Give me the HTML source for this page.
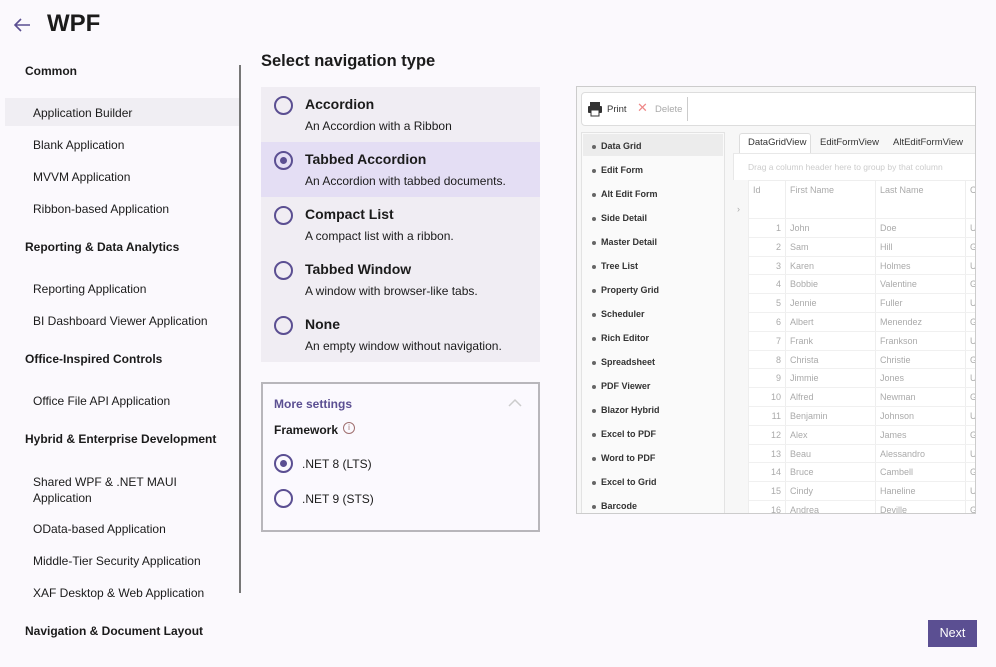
<!DOCTYPE html>
<html><head><meta charset="utf-8"><style>
*{box-sizing:border-box;margin:0;padding:0}
body{width:996px;height:666px;background:#fbf9fd;font-family:"Segoe UI","Liberation Sans",sans-serif;color:#1b1b1b;position:relative;overflow:hidden;font-size:12px}
#w{position:absolute;left:0;top:1px;width:996px;height:666px}
.abs{position:absolute}
.cat{position:absolute;left:25px;font-weight:bold;font-size:12px}
.it{position:absolute;left:33px;font-size:12px}
.opt{position:absolute;left:261px;width:279px;height:55px;background:#f0edf3}
.opt .r{position:absolute;left:13px;top:9px;width:19px;height:19px;border:2px solid #5b4f92;border-radius:50%}
.opt .t{position:absolute;left:44px;top:9px;font-weight:bold;font-size:14px}
.opt .d{position:absolute;left:44px;top:32px;font-size:12px}
.dot{position:absolute;left:4px;top:4px;width:7px;height:7px;border-radius:50%;background:#5b4f92}
.nl{position:absolute;left:24px;font-size:9px;font-weight:bold;color:#333}
.nl:before{content:"";position:absolute;left:-9px;top:4px;width:4px;height:4px;border-radius:50%;background:#666}
.gr{position:absolute;font-size:9px;color:#aaa}
</style></head><body><div id="w">
<svg class="abs" style="left:12px;top:15px" width="20" height="18"><path d="M18 9H3M9 3L3 9l6 6" stroke="#5b4f92" stroke-width="1.6" fill="none"/></svg>
<div class="abs" style="left:47px;top:9px;font-size:24px;font-weight:bold">WPF</div>

<div class="cat" style="top:63px">Common</div>
<div class="abs" style="left:5px;top:97px;width:234px;height:28px;background:#f0eef3"></div>
<div class="it" style="top:105px">Application Builder</div>
<div class="it" style="top:137px">Blank Application</div>
<div class="it" style="top:169px">MVVM Application</div>
<div class="it" style="top:201px">Ribbon-based Application</div>
<div class="cat" style="top:239px">Reporting &amp; Data Analytics</div>
<div class="it" style="top:281px">Reporting Application</div>
<div class="it" style="top:313px">BI Dashboard Viewer Application</div>
<div class="cat" style="top:351px">Office-Inspired Controls</div>
<div class="it" style="top:393px">Office File API Application</div>
<div class="cat" style="top:431px">Hybrid &amp; Enterprise Development</div>
<div class="it" style="top:473px;line-height:16px">Shared WPF &amp; .NET MAUI<br>Application</div>
<div class="it" style="top:521px">OData-based Application</div>
<div class="it" style="top:553px">Middle-Tier Security Application</div>
<div class="it" style="top:585px">XAF Desktop &amp; Web Application</div>
<div class="cat" style="top:623px">Navigation &amp; Document Layout</div>
<div class="abs" style="left:239px;top:64px;width:2px;height:528px;background:#777"></div>

<div class="abs" style="left:261px;top:51px;font-size:16.5px;font-weight:bold">Select navigation type</div>
<div class="opt" style="top:86px"><div class="r"></div><div class="t">Accordion</div><div class="d">An Accordion with a Ribbon</div></div>
<div class="opt" style="top:141px;background:#e4def4"><div class="r"><div class="dot"></div></div><div class="t">Tabbed Accordion</div><div class="d">An Accordion with tabbed documents.</div></div>
<div class="opt" style="top:196px"><div class="r"></div><div class="t">Compact List</div><div class="d">A compact list with a ribbon.</div></div>
<div class="opt" style="top:251px"><div class="r"></div><div class="t">Tabbed Window</div><div class="d">A window with browser-like tabs.</div></div>
<div class="opt" style="top:306px"><div class="r"></div><div class="t">None</div><div class="d">An empty window without navigation.</div></div>

<div class="abs" style="left:261px;top:381px;width:279px;height:150px;border:2px solid #b8b6bb;background:#fbf9fe"></div>
<div class="abs" style="left:274px;top:396px;font-weight:bold;color:#5b4f92">More settings</div>
<svg class="abs" style="left:507px;top:397px" width="16" height="10"><path d="M2 8l6-6 6 6" stroke="#ccc" stroke-width="1.5" fill="none"/></svg>
<div class="abs" style="left:274px;top:422px;font-weight:bold">Framework</div>
<div class="abs" style="left:343px;top:421px;width:12px;height:12px;border:1px solid #a07070;border-radius:50%;font-size:8px;text-align:center;line-height:10px;color:#a07070">i</div>
<div class="opt" style="left:261px;top:443px;width:0;background:none"><div class="r" style="left:13px;top:10px"><div class="dot"></div></div></div>
<div class="abs" style="left:302px;top:456px">.NET 8 (LTS)</div>
<div class="opt" style="left:261px;top:478px;width:0;background:none"><div class="r" style="left:13px;top:10px"></div></div>
<div class="abs" style="left:302px;top:491px">.NET 9 (STS)</div>

<div class="abs" style="left:576px;top:85px;width:400px;height:428px;border:1px solid #ccc;background:#f7f7f7;overflow:hidden">
 <div class="abs" style="left:4px;top:5px;width:400px;height:34px;background:#fff;border:1px solid #ddd;border-radius:4px"></div>
 <svg class="abs" style="left:10px;top:14px" width="16" height="16"><rect x="3" y="1" width="10" height="4" fill="#333"/><rect x="1" y="5" width="14" height="7" rx="1" fill="#333"/><rect x="4" y="9" width="8" height="6" fill="#fff" stroke="#333"/></svg>
 <div class="abs" style="left:30px;top:17px;font-size:9.5px;color:#333">Print</div>
 <div class="abs" style="left:60px;top:13px;font-size:13px;color:#e88">✕</div>
 <div class="abs" style="left:78px;top:17px;font-size:9.5px;color:#aaa">Delete</div>
 <div class="abs" style="left:110px;top:10px;width:1px;height:24px;background:#ccc"></div>
 <div class="abs" style="left:4px;top:45px;width:144px;height:383px;background:#fafafa;border:1px solid #e3e3e3"></div>
 <div class="abs" style="left:6px;top:47px;width:140px;height:22px;background:#ececec"></div>
 <div class="nl" style="top:54px">Data Grid</div><div class="nl" style="top:78px">Edit Form</div><div class="nl" style="top:102px">Alt Edit Form</div><div class="nl" style="top:126px">Side Detail</div><div class="nl" style="top:150px">Master Detail</div><div class="nl" style="top:174px">Tree List</div><div class="nl" style="top:198px">Property Grid</div><div class="nl" style="top:222px">Scheduler</div><div class="nl" style="top:246px">Rich Editor</div><div class="nl" style="top:270px">Spreadsheet</div><div class="nl" style="top:294px">PDF Viewer</div><div class="nl" style="top:318px">Blazor Hybrid</div><div class="nl" style="top:342px">Excel to PDF</div><div class="nl" style="top:366px">Word to PDF</div><div class="nl" style="top:390px">Excel to Grid</div><div class="nl" style="top:414px">Barcode</div>
 <div class="abs" style="left:162px;top:46px;width:72px;height:20px;background:#fff;border:1px solid #ddd;border-bottom:none;border-radius:3px 3px 0 0"></div>
 <div class="abs" style="left:171px;top:50px;font-size:9.5px;color:#333">DataGridView</div>
 <div class="abs" style="left:243px;top:50px;font-size:9.5px;color:#333">EditFormView</div>
 <div class="abs" style="left:316px;top:50px;font-size:9.5px;color:#333">AltEditFormView</div>
 <div class="abs" style="left:156px;top:66px;width:250px;height:370px;background:#fff;border:1px solid #e8e8e8"></div>
 <div class="abs" style="left:171px;top:75px;font-size:8.5px;color:#ccc">Drag a column header here to group by that column</div>
 <div class="abs" style="left:156px;top:93px;width:250px;height:1px;background:#eee"></div>
 <div class="abs" style="left:156px;top:93px;width:16px;height:340px;background:#f7f7f7;border-right:1px solid #eee"></div>
 <div class="abs" style="left:208px;top:93px;width:1px;height:340px;background:#eee"></div>
 <div class="abs" style="left:298px;top:93px;width:1px;height:340px;background:#eee"></div>
 <div class="abs" style="left:388px;top:93px;width:1px;height:340px;background:#eee"></div>
 <div class="gr" style="left:176px;top:98px">Id</div><div class="gr" style="left:213px;top:98px">First Name</div><div class="gr" style="left:303px;top:98px">Last Name</div><div class="gr" style="left:393px;top:98px">C</div>
 <div class="gr" style="left:160px;top:117px">›</div>
 <div id="rows"></div>
</div>
<div class="abs" style="left:928px;top:619px;width:49px;height:27px;background:#5b4f92;color:#fff;text-align:center;line-height:27px;font-size:12.5px">Next</div>
</div>
<script>
var n=[["John","Doe"],["Sam","Hill"],["Karen","Holmes"],["Bobbie","Valentine"],["Jennie","Fuller"],["Albert","Menendez"],["Frank","Frankson"],["Christa","Christie"],["Jimmie","Jones"],["Alfred","Newman"],["Benjamin","Johnson"],["Alex","James"],["Beau","Alessandro"],["Bruce","Cambell"],["Cindy","Haneline"],["Andrea","Deville"]],h="";
for(var i=0;i<16;i++){var y=132+i*18.8;h+='<div class="abs" style="left:172px;top:'+(y-1)+'px;width:234px;height:1px;background:#f0f0f0"></div><div class="gr" style="left:176px;top:'+(y+4)+'px;width:28px;text-align:right">'+(i+1)+'</div><div class="gr" style="left:213px;top:'+(y+4)+'px">'+n[i][0]+'</div><div class="gr" style="left:303px;top:'+(y+4)+'px">'+n[i][1]+'</div><div class="gr" style="left:393px;top:'+(y+4)+'px">'+"UGUGUGUGUGUGUGUG"[i]+'</div>';}
document.getElementById("rows").outerHTML=h;
</script>
</body></html>
